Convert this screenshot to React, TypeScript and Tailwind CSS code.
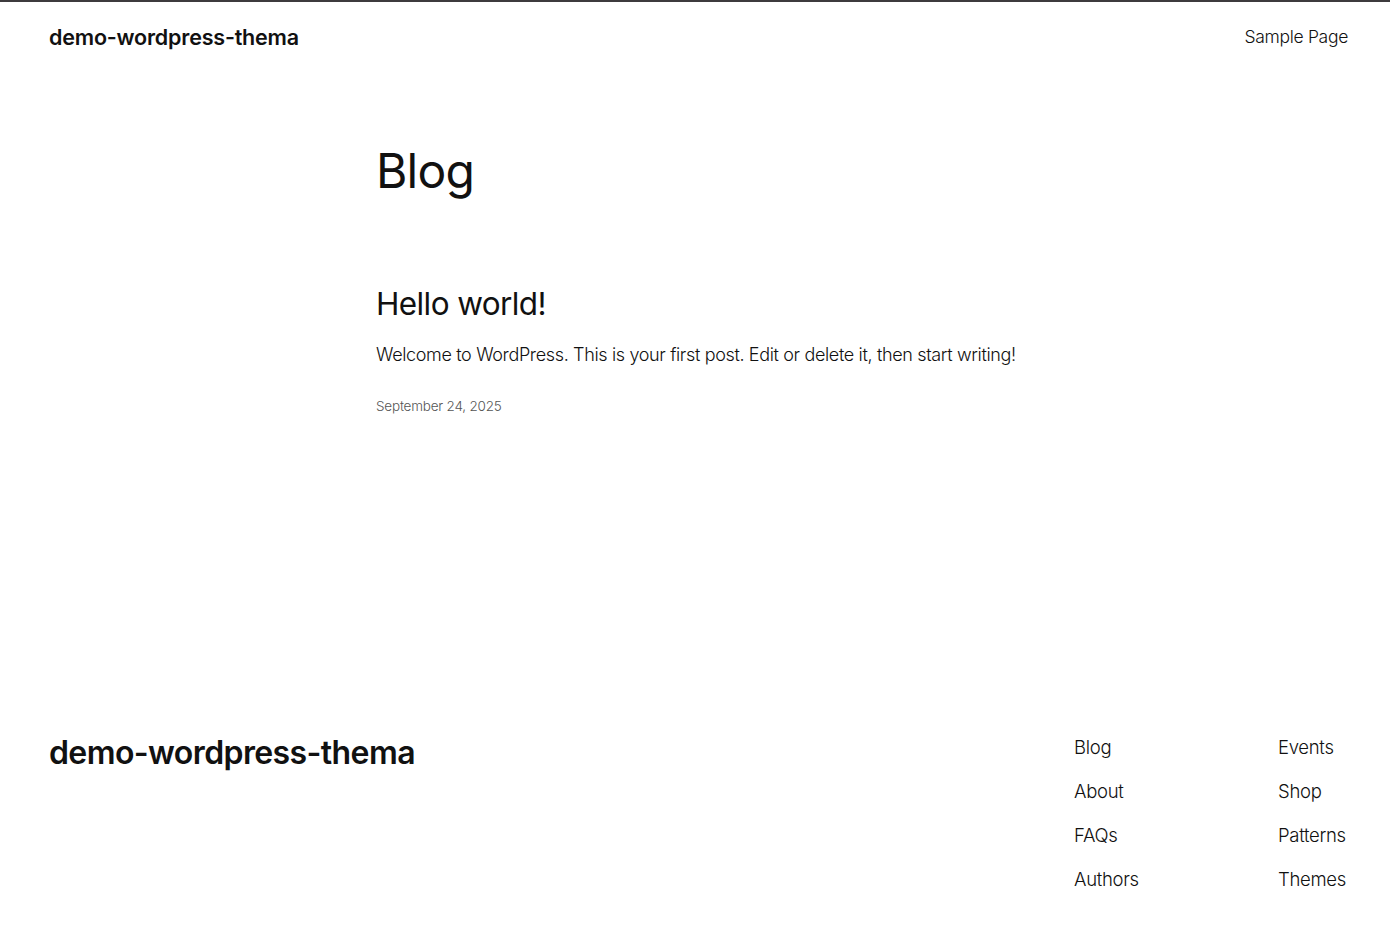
const footerLinks = [
  ['Blog', 'Events'],
  ['About', 'Shop'],
  ['FAQs', 'Patterns'],
  ['Authors', 'Themes'],
];

export default function App() {
  return (
    <div className="min-h-[939px] border-t-2 border-[#3d3b3d] bg-white font-['Inter',sans-serif] text-[#111111]">
      <header className="flex h-[70px] items-center justify-between pl-[49px] pr-[42px]">
        <a href="#" className="text-[21.5px] font-semibold tracking-[-0.2px] text-[#111111]">
          demo-wordpress-thema
        </a>
        <nav className="pt-[1px] text-[17.5px] font-light tracking-[-0.3px]">
          <a href="#">Sample Page</a>
        </nav>
      </header>

      <main className="mx-auto w-[638px] pt-[71px]">
        <h1 className="text-[48px] font-normal leading-[1.15] tracking-[-0.8px]">Blog</h1>
        <article className="mt-[87px]">
          <h2 className="text-[31.5px] font-normal leading-[1.2] tracking-[-0.6px]">
            <a href="#">Hello world!</a>
          </h2>
          <p className="mt-[18px] whitespace-nowrap text-[18px] font-light leading-[1.5] tracking-[-0.35px]">
            Welcome to WordPress. This is your first post. Edit or delete it, then start writing!
          </p>
          <p className="mt-[28px] text-[13.5px] font-light leading-[1.5] tracking-[-0.2px] text-[#555555]">
            September 24, 2025
          </p>
        </article>
      </main>

      <footer className="mt-[318px] flex justify-between pb-[45px] pl-[49px] pr-[42px]">
        <div className="text-[32px] font-semibold leading-[1.2] tracking-[-0.6px]">
          demo-wordpress-thema
        </div>
        <nav className="grid grid-cols-[204px_70px] gap-y-[20px] pt-[1px] text-[18.5px] font-light tracking-[-0.3px]">
          {footerLinks.flat().map((label) => (
            <a key={label} href="#" className="whitespace-nowrap leading-[24px]">
              {label}
            </a>
          ))}
        </nav>
      </footer>
    </div>
  );
}
